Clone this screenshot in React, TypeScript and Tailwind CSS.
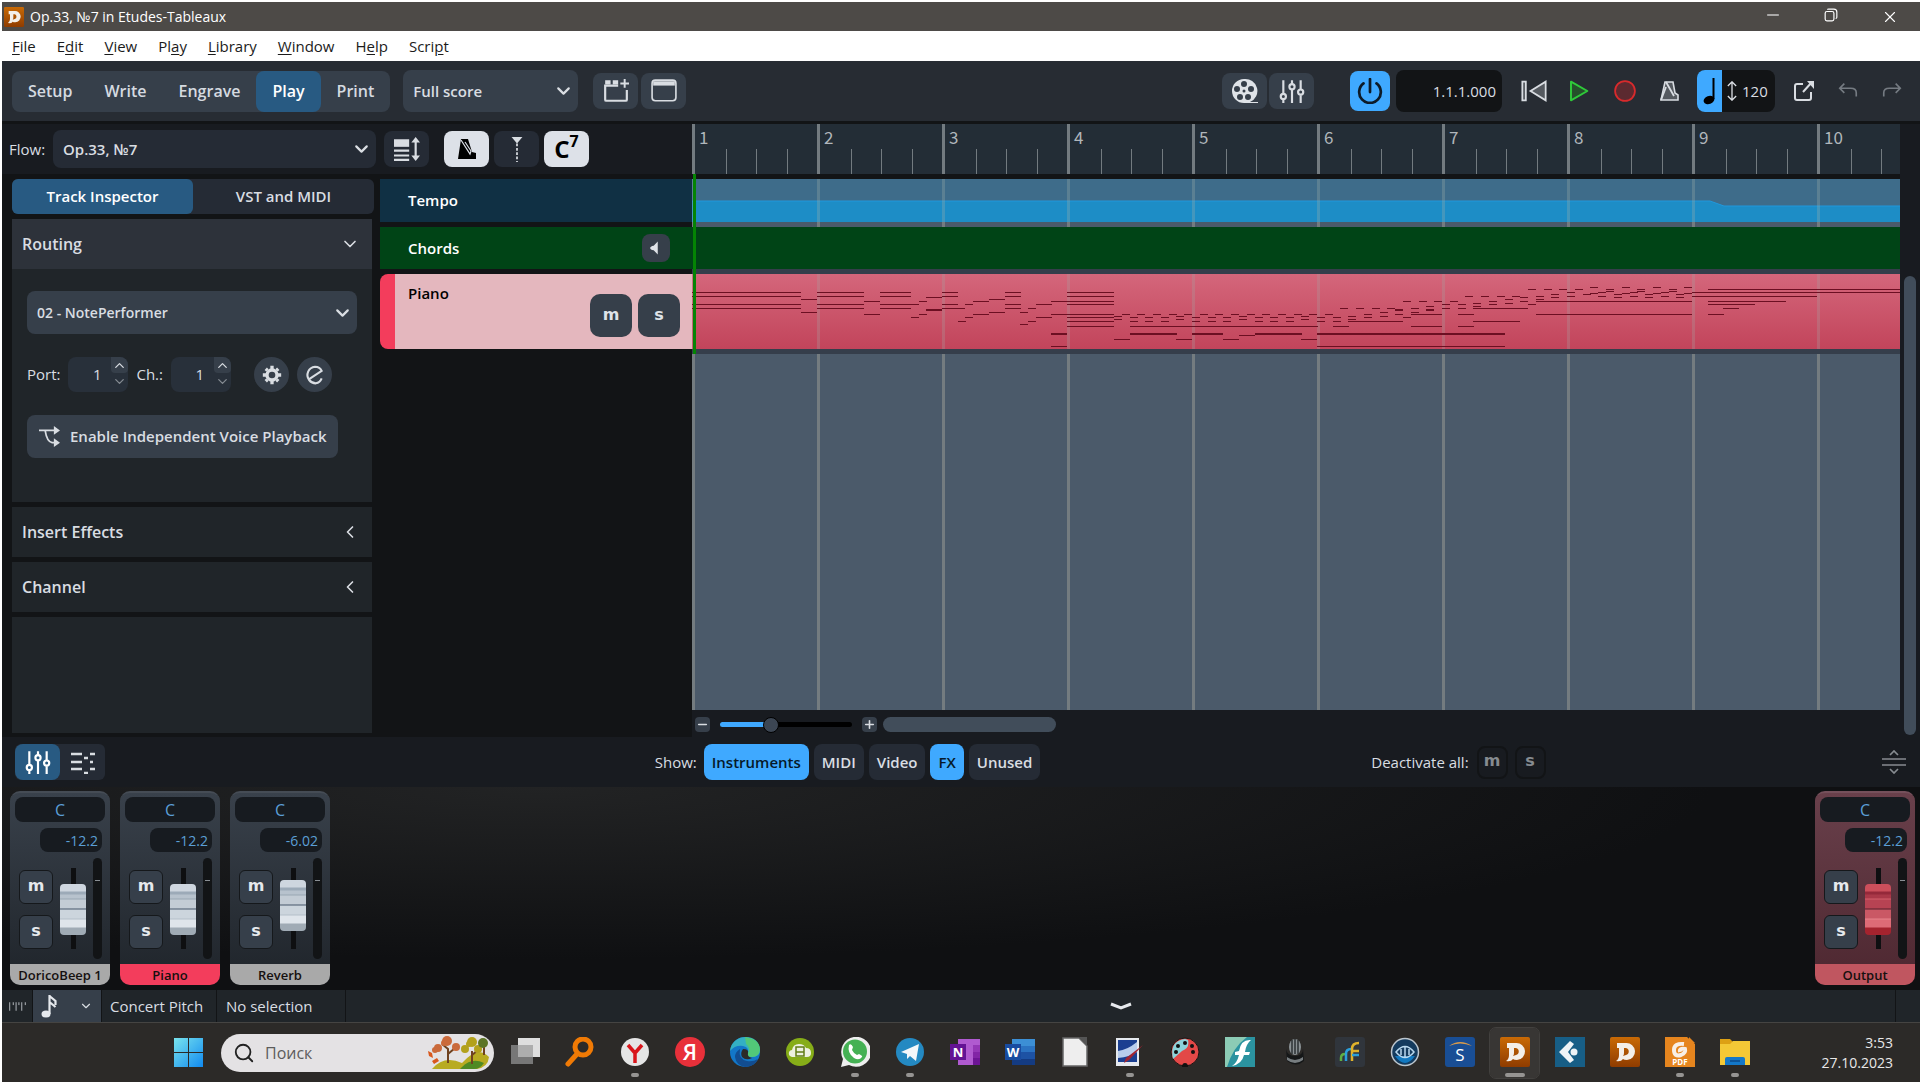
import { useState } from "react";
import type { ReactNode } from "react";
import clsx from "clsx";
import { ChevronDown, ChevronLeft, ChevronUp, Minus, Plus, Search, X } from "lucide-react";

const modes = ["Setup", "Write", "Engrave", "Play", "Print"];

const menus = [
  ["", "F", "ile"],
  ["E", "d", "it"],
  ["", "V", "iew"],
  ["Pl", "a", "y"],
  ["", "L", "ibrary"],
  ["", "W", "indow"],
  ["H", "e", "lp"],
  ["Scri", "p", "t"],
];

// [start, end, y] with start and end in sixteenths from bar 1
const notes: number[][] = [
  ...[18, 22, 30, 34].map((y) => [0, 14, y]),
  [14, 16, 25], [14, 16, 38],
  ...[18, 22, 30, 34].map((y) => [16, 22, y]),
  [22, 24, 27], [22, 24, 40],
  [24, 28, 18], [24, 28, 22], [24, 29, 30], [24, 28, 34],
  [28, 29, 43], [29, 30, 27], [29, 30, 40], [30, 32, 23],
  [32, 34, 18], [32, 34, 22], [32, 34, 30], [32, 35, 34],
  [34, 35, 47], [35, 36, 30], [35, 36, 43], [36, 38, 27], [36, 38, 40], [38, 40, 25], [38, 40, 38],
  ...[18, 22, 30, 34].map((y) => [40, 42, y]),
  [42, 43, 38], [42, 43, 50], [43, 44, 34], [43, 44, 47], [44, 46, 30], [44, 46, 43],
  [46, 54, 27], [46, 54, 40], [46, 48, 72],
  ...[18, 22, 30, 43, 47, 52].map((y) => [48, 54, y]),
  [54, 56, 65], [56, 80, 52], [62, 64, 65], [68, 70, 65], [70, 72, 61], [78, 80, 65],
  ...[54, 62, 70, 78, 84].flatMap((n) => [[n, n + 1, 42], [n, n + 1, 45]]),
  ...[56, 58, 60, 64, 66, 68, 72, 74, 76, 80, 82].flatMap((n) => [[n, n + 1, 43], [n, n + 1, 47]]),
  ...[55, 57, 59, 61, 63, 65, 67, 69, 71, 73, 75, 77, 79, 81].map((n) => [n, n + 1, 40]),
  ...[83, 85, 87, 89].map((n) => [n, n + 1, 34]),
  [82, 84, 52], [84, 91, 47], [86, 87, 40], [86, 87, 43], [88, 89, 38], [88, 89, 42], [90, 91, 40],
  [91, 92, 43], [92, 93, 34], [92, 93, 38], [94, 95, 32], [96, 97, 30], [96, 97, 34], [98, 99, 30], [98, 99, 34],
  ...[91, 93, 95, 97].map((n) => [n, n + 1, 27]),
  ...[99, 101, 103, 105].map((n) => [n, n + 1, 22]),
  ...[107, 109, 111, 113].map((n) => [n, n + 1, 15]),
  [92, 96, 40], [92, 96, 52], [98, 100, 40], [98, 100, 52], [100, 107, 34], [100, 106, 47], [80, 104, 72],
  [100, 101, 29], [100, 101, 32], [102, 103, 27], [102, 103, 30], [104, 105, 25], [104, 105, 29],
  [106, 107, 23], [106, 107, 27], [107, 108, 30], [108, 109, 22], [108, 109, 25], [110, 111, 20], [110, 111, 23],
  [112, 113, 18], [112, 113, 22], [114, 115, 20],
  ...[115, 119, 123, 127].flatMap((n) => [[n, n + 1, 13], [n, n + 1, 19]]),
  ...[116, 120, 124].flatMap((n) => [[n, n + 1, 18], [n, n + 1, 22], [n + 1, n + 2, 15], [n + 1, n + 2, 17], [n + 2, n + 3, 20], [n + 2, n + 3, 23]]),
  [108, 128, 27], [108, 128, 40], [128, 200, 18], [130, 200, 15], [128, 144, 22],
  [130, 140, 27], [130, 136, 30], [132, 134, 34], [130, 132, 40],
];

const thickNotes: number[][] = [
  [30, 32, 35], [46, 48, 59], [56, 62, 59], [64, 68, 59], [72, 78, 59], [80, 104, 59], [90, 91, 35], [94, 95, 35],
];

const SIXTEENTH = 7.8125;

function Svg({ size = 24, className, children }: { size?: number; className?: string; children: ReactNode }) {
  return (
    <svg
      width={size}
      height={size}
      viewBox="0 0 24 24"
      fill="none"
      stroke="currentColor"
      strokeWidth="2"
      className={clsx("shrink-0", className)}
      aria-hidden="true"
    >
      {children}
    </svg>
  );
}

function DoricoIcon({ size }: { size: number }) {
  return (
    <svg width={size} height={size} viewBox="0 0 30 30" aria-hidden="true">
      <defs>
        <linearGradient id="dorico" x1="0" y1="0" x2="0" y2="1">
          <stop offset="0" stopColor="#c96a05" />
          <stop offset="1" stopColor="#8f3c00" />
        </linearGradient>
      </defs>
      <rect width="30" height="30" rx="2" fill="url(#dorico)" />
      <path fillRule="evenodd" d="M7 6h9a8.500 8.500 0 0 1 1 17q-3 0-4-1-2 3-7 2 3-2 3-6v-7H7zM14 11v5q0 2-1 3l3-1a3.600 3.600 0 0 0 0-7z" fill="#f3efe9" />
    </svg>
  );
}

function MixerIcon() {
  return (
    <Svg size={26}>
      <path d="M4 2v13M4 20v3M12 2v4M12 11v12M20 2v9M20 16v7" />
      <circle cx="4" cy="17" r="2.4" />
      <circle cx="12" cy="8" r="2.4" />
      <circle cx="20" cy="13" r="2.4" />
    </Svg>
  );
}

function IconButton({ label, className, children }: { label: string; className?: string; children: ReactNode }) {
  return (
    <button aria-label={label} className={clsx("flex h-9 w-[45px] items-center justify-center rounded-lg", className)}>
      {children}
    </button>
  );
}

function Select({ label, value, className }: { label: string; value: string; className?: string }) {
  return (
    <div className={clsx("relative", className)}>
      <select aria-label={label} className="size-full appearance-none rounded-lg bg-transparent pr-8 pl-2.5">
        <option>{value}</option>
      </select>
      <ChevronDown size={21} strokeWidth={2.5} className="pointer-events-none absolute top-1/2 right-1 -translate-y-1/2" />
    </div>
  );
}

function TitleBar() {
  return (
    <header className="flex h-[29px] items-center gap-1.5 bg-[#4d4a47] pl-0.5 text-sm text-white">
      <DoricoIcon size={20} />
      <h1 className="grow">Op.33, №7 in Etudes-Tableaux</h1>
      <div className="flex">
        <button aria-label="Minimize" className="flex w-[58px] justify-center">
          <Svg size={14}><path d="M2 12h20" strokeWidth="1.800" /></Svg>
        </button>
        <button aria-label="Restore" className="flex w-[58px] justify-center">
          <Svg size={14}><rect x="2" y="6" width="15" height="16" rx="3" /><path d="M6 3q0-1 2-1h9q5 0 5 5v9q0 2-2 2" /></Svg>
        </button>
        <button aria-label="Close" className="flex w-[60px] justify-center">
          <X size={18} strokeWidth={1.5} />
        </button>
      </div>
    </header>
  );
}

function MenuBar() {
  return (
    <nav className="flex h-[30px] items-center gap-[21px] bg-white pl-2.5 text-[15px] text-[#1b1b1b]">
      {menus.map(([before, key, after]) => (
        <button key={before + key + after}>
          {before}
          <u className="underline-offset-2">{key}</u>
          {after}
        </button>
      ))}
    </nav>
  );
}

function Toolbar() {
  const [mode, setMode] = useState("Play");
  return (
    <div className="flex h-[60px] items-center bg-[#272c33] pl-2.5">
      <div className="flex h-[41px] rounded-lg bg-[#363f4a] text-base font-semibold">
        {modes.map((m) => (
          <button
            key={m}
            onClick={() => setMode(m)}
            className={clsx("rounded-lg px-4", mode === m ? "bg-[#285a82] text-white" : "text-[#d5dae0]")}
          >
            {m}
          </button>
        ))}
      </div>
      <Select label="Layout" value="Full score" className="ml-[13px] h-[42px] w-[175px] rounded-lg bg-[#363f4a] text-[15px] font-semibold" />
      <IconButton label="New tab" className="ml-[15px] bg-[#363f4a]">
        <Svg size={26}>
          <path d="M14 7H2v13q0 1 1 1h18q1 0 1-1v-9" />
          <path d="M20 1v8M16 5h8" strokeWidth="1.800" />
          <path d="M2 4h5M9 4h5" strokeWidth="4" />
        </Svg>
      </IconButton>
      <IconButton label="Window" className="ml-[3px] bg-[#363f4a]">
        <Svg size={26}><rect x="1" y="2" width="22" height="19" rx="3" strokeWidth="1.5" /><path d="M2 5h20" strokeWidth="4" /></Svg>
      </IconButton>

      <div className="ml-auto flex items-center pr-[13px]">
        <IconButton label="Video" className="bg-[#363f4a]">
          <svg width="28" height="26" viewBox="0 0 28 26" fill="#dfe3e8" aria-hidden="true">
            <path fillRule="evenodd" d="M13 1a12 12 0 1 0 0 24h14v-1h-8A12 12 0 0 0 13 1M13 3a3 3 0 1 1 0 6 3 3 0 0 1 0-6M6 8a3 3 0 1 1 0 6 3 3 0 0 1 0-6M20 8a3 3 0 1 1 0 6 3 3 0 0 1 0-6M9 16a3 3 0 1 1 0 6 3 3 0 0 1 0-6M17 16a3 3 0 1 1 0 6 3 3 0 0 1 0-6M13 11.500a1.500 1.500 0 1 0 0 3 1.500 1.500 0 0 0 0-3" />
          </svg>
        </IconButton>
        <IconButton label="Mixer" className="ml-0.5 bg-[#363f4a]"><MixerIcon /></IconButton>
        <button aria-label="Activate project" className="ml-9 flex h-10 w-10 items-center justify-center rounded-lg bg-[#3fa9ff] text-[#0d1b28]">
          <Svg size={26}><path d="M12 1v12M6 5a10 10 0 1 0 12 0" strokeWidth="2.5" strokeLinecap="round" /></Svg>
        </button>
        <output className="ml-1.5 h-[42px] w-[106px] rounded-lg bg-[#121416] pr-1.5 text-right text-[15px] leading-[42px]">1.1.1.000</output>
        <button aria-label="Rewind" className="ml-[18px] w-8">
          <Svg size={28}><path d="M2 4h3v16H2zM22 4v16L9 12z" fill="#555a60" strokeWidth="1.5" /></Svg>
        </button>
        <button aria-label="Start playback" className="ml-3 w-8 text-[#2fc93a]">
          <Svg size={28}><path d="M6 4v16L20 12z" fill="#25502b" strokeWidth="1.700" strokeLinejoin="round" /></Svg>
        </button>
        <button aria-label="Record" className="ml-[15px] w-8 text-[#d82a2c]">
          <Svg size={28}><circle cx="12" cy="12" r="8.500" fill="#5c2a30" strokeWidth="1.500" /></Svg>
        </button>
        <button aria-label="Metronome click" className="ml-[15px] w-8">
          <Svg size={24}><path d="M7 3h8l2 11 3 2v5H3z" fill="#555a60" strokeWidth="1.600" /><path d="m8 3 8 14M3 21l5-13" strokeWidth="1.800" /></Svg>
        </button>
        <div className="ml-[7px] flex h-[42px] w-[78px] items-center overflow-hidden rounded-lg bg-[#121416]">
          <button aria-label="Fixed tempo mode" className="flex h-full w-[25px] items-center justify-center bg-[#3fa9ff] text-black">
            <svg width="14" height="28" viewBox="0 0 14 28" aria-hidden="true">
              <ellipse cx="6" cy="23" rx="5.500" ry="4" fill="currentColor" transform="rotate(-20 6 23)" />
              <path d="M10.500 1v21" stroke="currentColor" strokeWidth="2" />
            </svg>
          </button>
          <Svg size={20}><path d="M12 1v22M7 6l5-5 5 5M7 18l5 5 5-5" strokeWidth="1.600" /></Svg>
          <span className="text-[15px]">120</span>
        </div>
        <button aria-label="Open in new window" className="ml-[17px] w-[45px]">
          <Svg size={24}><path d="M11 5H5q-2 0-2 2v12q0 2 2 2h12q2 0 2-2v-6M11 13l9-10" /><path d="M15 2h7v8z" fill="currentColor" stroke="none" /></Svg>
        </button>
        <button aria-label="Undo" className="w-11 text-[#757b82]">
          <Svg size={22}><path d="M8 4 3 9l5 5M3 9h12q6 0 6 5v4" strokeWidth="1.800" /></Svg>
        </button>
        <button aria-label="Redo" className="w-[26px] text-[#757b82]">
          <Svg size={22}><path d="m16 4 5 5-5 5M21 9H9q-6 0-6 5v4" strokeWidth="1.800" /></Svg>
        </button>
      </div>
    </div>
  );
}

function FlowBar() {
  return (
    <div className="flex h-[50px] items-center bg-[#181b20] pl-[7px] text-[15px]">
      <span className="w-11">Flow:</span>
      <Select label="Flow" value="Op.33, №7" className="h-[38px] w-[323px] rounded-lg bg-[#252b35] font-semibold" />
      <IconButton label="Track heights" className="ml-2 bg-[#252b35]">
        <Svg size={26}>
          <path d="M0 3h14v7H0z" fill="currentColor" stroke="none" />
          <path d="M0 13.500h14M0 18h14M0 22h14M20 4v16" />
          <path d="m20 1 4 5h-8zM20 23l4-5h-8z" fill="currentColor" stroke="none" />
        </Svg>
      </IconButton>
      <IconButton label="Click" className="ml-[15px] bg-[#dde1e8] text-black">
        <Svg size={24}><path d="M6 2h7l4 13 4 1v6H3z" fill="currentColor" stroke="none" /><path d="m6 3 9 14 1-3-6-9" stroke="#dde1e8" strokeWidth="1.200" /></Svg>
      </IconButton>
      <IconButton label="Markers" className="ml-[5px] bg-[#252b35]">
        <Svg size={26}><path d="M7 1h10l-5 6z" fill="currentColor" stroke="none" /><path d="M12 7v17" strokeWidth="1.600" strokeDasharray="2.500 1.500" /></Svg>
      </IconButton>
      <IconButton label="Chords" className="ml-[5px] bg-[#dde1e8] text-2xl font-bold text-black">
        C<sup className="text-base">7</sup>
      </IconButton>
    </div>
  );
}

function NumberField({ id, label }: { id: string; label: string }) {
  return (
    <div className="flex items-center gap-2">
      <label htmlFor={id}>{label}</label>
      <div className="flex h-[35px] w-[60px] overflow-hidden rounded-lg bg-[#28303a]">
        <input
          id={id}
          type="number"
          defaultValue={1}
          className="w-[43px] appearance-none pr-2.5 text-right [&::-webkit-inner-spin-button]:appearance-none"
        />
        <div className="flex w-[17px] flex-col">
          <button aria-label={`${label} up`} className="flex h-4 items-center justify-center rounded-b bg-[#363f4a]"><ChevronUp size={15} /></button>
          <button aria-label={`${label} down`} className="flex h-4 items-center justify-center text-[#858b92]"><ChevronDown size={15} /></button>
        </div>
      </div>
    </div>
  );
}

function Inspector() {
  return (
    <aside className="flex w-[362px] shrink-0 flex-col gap-[5px]">
      <div className="flex h-[35px] rounded-md bg-[#252b35] text-[15px] font-semibold">
        <button className="w-[181px] rounded-md bg-[#285a82] text-white">Track Inspector</button>
        <button className="grow">VST and MIDI</button>
      </div>
      <section className="mr-0.5 bg-[#202529] pb-11">
        <button className="flex h-[50px] w-full items-center justify-between bg-[#2d323a] pr-3 pl-2.5 text-base font-semibold">
          Routing
          <ChevronDown size={20} />
        </button>
        <div className="flex flex-col items-start gap-[23px] px-[15px] pt-[22px] text-[15px]">
          <Select label="Instrument" value="02 - NotePerformer" className="h-[43px] w-full rounded-lg bg-[#363f4a] text-sm font-semibold" />
          <div className="flex items-center gap-2">
            <NumberField id="port" label="Port:" />
            <NumberField id="channel" label="Ch.:" />
            <button aria-label="Edit instrument" className="ml-[15px] flex size-[35px] items-center justify-center rounded-full bg-[#363f4a]">
              <Svg size={20}><circle cx="12" cy="12" r="6" strokeWidth="4" /><path d="M12 1v4M12 19v4M1 12h4M19 12h4M4.500 4.500l2 2M17.500 17.500l2 2M4.500 19.500l2-2M17.500 6.500l2-2" strokeWidth="4" /></Svg>
            </button>
            <button aria-label="Endpoint setup" className="flex size-[35px] items-center justify-center rounded-full bg-[#363f4a]">
              <Svg size={20}><path d="M5 17 20 7Q18 2 12 2a10 10 0 0 0-7 16q3 4 8 4 5-1 7-6" strokeWidth="2.500" /></Svg>
            </button>
          </div>
          <button className="flex h-[43px] items-center gap-2.5 rounded-lg bg-[#363f4a] pr-3 pl-3 font-semibold">
            <Svg size={21}><path d="M0 5h19M7 5q2 13 8 14h4" /><path d="m17 0 7 5-7 5zM17 14l7 5-7 5z" fill="currentColor" stroke="none" /></Svg>
            Enable Independent Voice Playback
          </button>
        </div>
      </section>
      {["Insert Effects", "Channel"].map((name) => (
        <button key={name} className="mr-0.5 flex h-[50px] items-center justify-between bg-[#202529] pr-3 pl-2.5 text-base font-semibold">
          {name}
          <ChevronLeft size={20} />
        </button>
      ))}
      <div className="mr-0.5 mb-1 grow bg-[#202529]" />
    </aside>
  );
}

function TrackHeaders() {
  return (
    <div className="ml-1.5 flex grow flex-col gap-[5px] text-[15px] font-semibold text-white">
      <div className="flex h-[43px] items-center bg-[#103044] pl-7">Tempo</div>
      <div className="flex h-[42px] items-center justify-between bg-[#004416] pr-[22px] pl-7">
        Chords
        <button aria-label="Hear chords" className="flex size-7 items-center justify-center rounded-lg bg-[#363f4a] text-[#dfe3e8]">
          <Svg size={14}><path d="M15 1v22L8 16q-6-1-6-4t6-4z" fill="currentColor" stroke="none" /></Svg>
        </button>
      </div>
      <div className="flex h-[75px] justify-between rounded-l-lg border-l-[15px] border-[#f33d5c] bg-[#e4b7be] pr-3 pl-[13px] text-black">
        <span className="pt-2">Piano</span>
        <div className="mt-5 flex gap-1.5">
          <MuteSolo className="h-[43px] w-[42px] rounded-[10px] bg-[#363f4a] text-[#dfe3e8]">m</MuteSolo>
          <MuteSolo className="h-[43px] w-[42px] rounded-[10px] bg-[#363f4a] text-[#dfe3e8]">s</MuteSolo>
        </div>
      </div>
    </div>
  );
}

function MuteSolo({ className, children }: { className: string; children: string }) {
  return (
    <button
      aria-label={children === "m" ? "Mute" : "Solo"}
      className={clsx("flex items-center justify-center pb-0.5 font-['DejaVu_Sans',sans-serif] text-base font-bold", className)}
    >
      {children}
    </button>
  );
}

function BarLines({ className }: { className: string }) {
  return (
    <div className="pointer-events-none absolute inset-0 flex overflow-hidden">
      {Array.from({ length: 10 }, (_, i) => (
        <div key={i} className={clsx("w-[125px] shrink-0 border-l-[3px]", className)} />
      ))}
    </div>
  );
}

function Ruler() {
  return (
    <div className="flex h-[50px] overflow-hidden bg-[#232d36] font-['Noto_Sans_CJK_JP',sans-serif] text-[17px] text-[#b0b6bb]">
      {Array.from({ length: 10 }, (_, i) => (
        <div key={i} className="flex w-[125px] shrink-0 flex-col justify-between border-l-[3px] border-[#737b80]">
          <span className="h-[25px] pl-1 leading-[25px]">{i + 1}</span>
          <div className="grid h-[25px] grid-cols-4">
            {[0, 1, 2, 3].map((beat) => (
              <div key={beat} className={clsx(beat > 0 && "border-l border-[#737b80]")} />
            ))}
          </div>
        </div>
      ))}
    </div>
  );
}

function Timeline() {
  return (
    <div className="flex min-w-0 grow flex-col">
      <Ruler />
      <div className="h-[5px] bg-[#121416]" />
      <div className="relative flex grow flex-col gap-[5px] bg-[#4b5a6a]">
        <BarLines className="border-[#747c80]" />
        <div className="relative h-[43px] overflow-hidden bg-[#3e6c8a]">
          <svg width="100%" height="43" aria-hidden="true">
            <path d="M0 22h1018l14 5h2000v20H0z" fill="#1d8dc6" />
            <path d="M0 22h1018l14 5h2000" fill="none" stroke="#2098dc" />
          </svg>
          <BarLines className="border-[#a0b0a8]/30" />
        </div>
        <div className="relative h-[42px] bg-[#004416]" />
        <div className="relative h-[75px] bg-linear-to-b from-[#d4667b] to-[#c2445b] shadow-[0_5px_#353e4b,0_-5px_#353e4b]">
          <BarLines className="border-[#a8a0a0]/30" />
          <svg width="100%" height="75" fill="#6c0f22" className="relative" aria-hidden="true">
            {notes.map(([start, end, y], i) => (
              <rect key={i} x={Math.round(start * SIXTEENTH)} y={y} width={Math.round((end - start) * SIXTEENTH)} height="1" />
            ))}
            {thickNotes.map(([start, end, y], i) => (
              <rect key={i} x={Math.round(start * SIXTEENTH)} y={y} width={Math.round((end - start) * SIXTEENTH)} height="2" />
            ))}
          </svg>
        </div>
        {/* playhead */}
        <div className="absolute -top-[5px] left-px h-[180px] w-[3px] bg-[#048404]" />
      </div>
      <div className="flex h-[27px] shrink-0 items-center bg-[#181b20] pt-0.5 pl-[3px]">
        <button aria-label="Zoom out" className="flex size-[15px] items-center justify-center rounded-sm bg-[#363f4a]"><Minus size={13} strokeWidth={3} /></button>
        <input
          type="range"
          aria-label="Zoom"
          defaultValue={37}
          className="mx-2.5 h-[5px] w-[132px] appearance-none rounded-full bg-[linear-gradient(to_right,#3fa9ff_38%,#000_38%)] [&::-webkit-slider-thumb]:size-4 [&::-webkit-slider-thumb]:appearance-none [&::-webkit-slider-thumb]:rounded-full [&::-webkit-slider-thumb]:border [&::-webkit-slider-thumb]:border-black [&::-webkit-slider-thumb]:bg-[#3c4653]"
        />
        <button aria-label="Zoom in" className="flex size-[15px] items-center justify-center rounded-sm bg-[#363f4a]"><Plus size={13} strokeWidth={3} /></button>
        <div className="ml-1.5 h-[15px] w-[173px] rounded-full bg-[#414d5a]" />
      </div>
    </div>
  );
}

function MixerBar() {
  const filters = [
    { name: "Instruments", on: true },
    { name: "MIDI", on: false },
    { name: "Video", on: false },
    { name: "FX", on: true },
    { name: "Unused", on: false },
  ];
  return (
    <div className="grid h-[50px] grid-cols-[1fr_auto_1fr] items-center bg-[#181b20] pr-3.5 pl-[13px] text-[15px]">
      <div className="flex">
        <div className="flex rounded-md bg-[#252b35]">
          <IconButton label="Mixer" className="bg-[#285a82] text-white"><MixerIcon /></IconButton>
          <IconButton label="Key editor">
            <Svg size={24}><path d="M0 4h11M0 12h11M0 19h11M19 4h5M13 8h4M19 12h3M19 19h5M13 23h4" strokeWidth="2.600" /></Svg>
          </IconButton>
        </div>
      </div>
      <div className="flex items-center gap-[5px] pr-[226px]">
        <span className="pr-0.5">Show:</span>
        {filters.map(({ name, on }) => (
          <button
            key={name}
            className={clsx("h-9 rounded-lg px-2 font-semibold", on ? "bg-[#3fa9ff] text-[#06192a]" : "bg-[#252b35]")}
          >
            {name}
          </button>
        ))}
      </div>
      <div className="flex items-center gap-[7px] pl-[105px]">
        <span className="pr-px">Deactivate all:</span>
        <MuteSolo className="h-[33px] w-[31px] rounded-lg border-2 border-[#121416] text-[#868b90]">m</MuteSolo>
        <MuteSolo className="h-[33px] w-[31px] rounded-lg border-2 border-[#121416] text-[#868b90]">s</MuteSolo>
        <button aria-label="Resize panel" className="ml-auto text-[#868b90]">
          <Svg size={24}><path d="M0 9h24M0 15h24M8 5l4-4 4 4M8 19l4 4 4-4" strokeWidth="1.700" /></Svg>
        </button>
      </div>
    </div>
  );
}

const fader =
  "h-[101px] w-[26px] appearance-none bg-[linear-gradient(#0e0f11,#0e0f11)] bg-[length:5px_81px] bg-center bg-no-repeat [direction:rtl] [writing-mode:vertical-lr] [&::-webkit-slider-thumb]:h-[51px] [&::-webkit-slider-thumb]:w-[26px] [&::-webkit-slider-thumb]:appearance-none [&::-webkit-slider-thumb]:rounded-sm";

const greyThumb =
  "[&::-webkit-slider-thumb]:bg-[linear-gradient(#ced6df_0_7px,#9caab8_8px_10px,#b7c2cd_11px_14px,#99a7b3_15px,#c3ccd5_16px_24px,#46566a_25px,#ccd5dd_26px_34px,#b4bfc9_35px,#dfe5eb_36px_43px,#a0abb5_44px_100%)]";

const redThumb =
  "[&::-webkit-slider-thumb]:bg-[linear-gradient(#cc4f5b_0_7px,#95293a_8px_10px,#aa3848_11px_14px,#d3606b_15px,#b74353_16px_24px,#541f2b_25px,#ca5865_26px_34px,#e6848c_35px,#de6b76_36px_43px,#a5232e_44px_100%)]";

type Strip = { name: string; gain: string; level: number; color: string; output?: boolean };

const strips: Strip[] = [
  { name: "DoricoBeep 1", gain: "-12.2", level: 48, color: "bg-[#a9a9a9]" },
  { name: "Piano", gain: "-12.2", level: 48, color: "bg-[#f33d5c]" },
  { name: "Reverb", gain: "-6.02", level: 57, color: "bg-[#a9a9a9]" },
];

const output: Strip = { name: "Output", gain: "-12.2", level: 48, color: "bg-[#c05660]", output: true };

function ChannelStrip({ name, gain, level, color, output }: Strip) {
  return (
    <section
      className={clsx(
        "flex w-[100px] flex-col overflow-hidden rounded-[10px] border-t-2",
        output ? "border-[#75505b] bg-linear-to-b from-[#69404b] to-[#4d2730]" : "border-[#454c55] bg-linear-to-b from-[#39414b] to-[#1f242a]",
      )}
    >
      <div className="mx-[5px] mt-1 h-[25px] rounded-lg bg-[#171b20] text-center text-base leading-[26px] text-[#5b9fd6]">C</div>
      <div className="mt-1.5 mr-2 ml-[30px] h-6 rounded-lg bg-[#171b20] pr-1 text-right text-sm leading-[26px] text-[#5b9fd6]">{gain}</div>
      <div className="mt-1.5 flex px-2">
        <div className="mt-3 ml-px flex flex-col gap-[11px]">
          <MuteSolo className="size-[34px] rounded-md border border-[#15181b] bg-[#363f4a] text-[#e6e9ed]">m</MuteSolo>
          <MuteSolo className="size-[34px] rounded-md border border-[#15181b] bg-[#363f4a] text-[#e6e9ed]">s</MuteSolo>
        </div>
        <input type="range" aria-label={`${name} volume`} defaultValue={level} className={clsx("ml-[7px]", fader, output ? redThumb : greyThumb)} />
        <div className="ml-auto h-[101px] w-[9px] rounded-full bg-[#121416] px-0.5 pt-[22px]">
          <div className="h-px bg-[#8a8f94]" />
        </div>
      </div>
      <h2 className={clsx("mt-[5px] h-[21px] text-center text-[13px] leading-[22px] font-semibold whitespace-nowrap text-[#15100f]", color)}>{name}</h2>
    </section>
  );
}

function Mixer() {
  return (
    <div className="flex h-[203px] items-start gap-2.5 bg-[radial-gradient(ellipse_at_28%_0%,#222324,#0f1012_60%)] pt-1 pr-[5px] pl-2">
      {strips.map((s) => (
        <ChannelStrip key={s.name} {...s} />
      ))}
      <div className="ml-auto">
        <ChannelStrip {...output} />
      </div>
    </div>
  );
}

function StatusBar() {
  return (
    <div className="flex h-8 items-stretch gap-px bg-[#121416] text-[15px]">
      <div className="flex w-[30px] items-center justify-center bg-[#202529]">
        <Svg size={17} className="text-[#b3b8bd]"><path d="M1 6v12M6 6v4M10 6v12M14 6v4M18 6v12M23 6v4" strokeWidth="1.400" /></Svg>
      </div>
      <button aria-label="Rhythmic grid" className="flex w-[68px] items-center justify-between bg-[#363f4a] px-2">
        <svg width="16" height="24" viewBox="0 0 16 24" aria-hidden="true">
          <ellipse cx="5" cy="20" rx="4.500" ry="3.500" fill="#e6e9ed" />
          <path d="M8.500 20V1M8.500 2l6 5v4M8.500 8l6 5" stroke="#e6e9ed" strokeWidth="2.200" fill="none" />
        </svg>
        <ChevronDown size={14} />
      </button>
      <div className="flex w-[114px] items-center bg-[#202529] pl-2">Concert Pitch</div>
      <div className="flex w-[128px] items-center bg-[#202529] pl-[9px]">No selection</div>
      <div className="flex grow items-center justify-center bg-[#202529]">
        <svg width="22" height="8" viewBox="0 0 22 8" fill="none" stroke="#e6e9ed" strokeWidth="3" aria-hidden="true"><path d="m1 2 10 4 10-4" /></svg>
      </div>
      <div className="w-6 bg-[#202529]" />
    </div>
  );
}

const apps: { name: string; state?: "open" | "active"; icon: ReactNode }[] = [
  { name: "Task view", icon: <><rect x="1" y="8" width="22" height="19" fill="#777" /><rect x="8" y="1" width="22" height="19" fill="#dedede" /><path d="M8 8h15v12H8z" fill="#adadad" /></> },
  { name: "Everything", icon: <><circle cx="18" cy="10" r="8" fill="none" stroke="#f07a05" strokeWidth="5" /><path d="m12 17-9 10" stroke="#f07a05" strokeWidth="5" strokeLinecap="round" /></> },
  { name: "Yandex Browser", state: "open", icon: <><circle cx="15" cy="15" r="14" fill="#e5e5e5" /><path d="m8 8 7 8v10M22 8l-7 8" stroke="#d9151b" strokeWidth="3.500" fill="none" /></> },
  { name: "Yandex", icon: <><circle cx="15" cy="15" r="15" fill="#e8303a" /><text x="15" y="23" fontSize="22" fontWeight="600" fill="#fff" textAnchor="middle">Я</text></> },
  { name: "Edge", icon: <><circle cx="15" cy="15" r="15" fill="#1377c8" /><path d="M0 14C2-5 30-4 30 13q0 7-8 7-6 0-4-4 1-6-5-7-8-1-13 5z" fill="#34b0c4" /><path d="M15 0q15 2 15 13-1 7-8 7-6 0-4-4 3-5-2-9z" fill="#52c878" /><path d="M10 12q-2 10 7 12 6 1 11-2-4 8-13 8-9-2-10-10 0-5 5-8z" fill="#124d91" /><path d="M13 12q6 0 5 4-1 4 4 5-6 3-10-1-2-4 1-8z" fill="#2c2a28" /></> },
  { name: "Camo", icon: <><circle cx="15" cy="15" r="14" fill="#86ad18" /><path d="M7 20q-4-1-3-5 1-2 3-2 1-6 7-6 5 0 7 4 5 0 5 5 0 4-4 4z" fill="#edf1e0" /><path d="M11 10h8v9h-8zM11 15h8" fill="none" stroke="#617d16" strokeWidth="1.500" /></> },
  { name: "WhatsApp", state: "open", icon: <><path d="M1 30 3 22A15 15 0 1 1 9 28z" fill="#eee" /><circle cx="15" cy="14.500" r="12" fill="#45b154" /><path d="M9 8q2-2 4 2l-1 3q2 4 5 5l2-1q4 2 3 3-3 4-8 1Q7 16 9 8z" fill="#fff" /></> },
  { name: "Telegram", state: "open", icon: <><circle cx="15" cy="15" r="14" fill="#2489c2" /><path d="m6 15 18-8-3 17-6-5-3 3v-5z" fill="#f3f7fa" /></> },
  { name: "OneNote", icon: <><path d="M8 2h22v26H8z" fill="#b05ad0" /><path d="M23 8h7v7h-7z" fill="#9437b6" /><path d="M23 15h7v6h-7z" fill="#8225a6" /><path d="M23 21h7v7h-7z" fill="#6d1595" /><path d="M0 7h16v16H0z" fill="#641394" /><text x="8" y="20" fontSize="13" fontWeight="700" fill="#fff" textAnchor="middle">N</text></> },
  { name: "Word", icon: <><path d="M7 2h23v7H7z" fill="#3c8fd5" /><path d="M7 9h23v6H7z" fill="#2b73c2" /><path d="M7 15h23v7H7z" fill="#1d52a4" /><path d="M7 22h23v6H7z" fill="#143b82" /><path d="M0 7h16v16H0z" fill="#184ba0" /><text x="8" y="20" fontSize="13" fontWeight="700" fill="#fff" textAnchor="middle">W</text></> },
  { name: "LibreOffice", icon: <><path d="M3 1h16l8 8v20H3z" fill="#eee" stroke="#666" strokeWidth="1.500" /><path d="M19 0h8v9z" fill="#555" /></> },
  { name: "Paint", state: "open", icon: <><path d="M1 1h23v28H1z" fill="#e6e9ee" /><path d="M3 3h19v22H3z" fill="#1b3f91" /><path d="M3 14q9-1 19-9v10q-7 5-19 6z" fill="#b9cdec" /><path d="M28 8 14 23l-5 3 2-5z" fill="#a22431" /></> },
  { name: "Palette", icon: <><circle cx="15" cy="15" r="14" fill="#e34847" stroke="#151515" /><path d="M3 22Q-1 4 15 2l3 1q2 8-6 11z" fill="#8cd3da" /><g fill="#111"><circle cx="15" cy="6" r="2" /><circle cx="8" cy="9" r="2" /><circle cx="22" cy="9" r="2" /><circle cx="6" cy="15" r="2" /><circle cx="23" cy="15" r="2" /><path d="M12 30q0-4 3-4t3 4z" /></g></> },
  { name: "Finale", icon: <><path d="M0 0h30v30H0z" fill="#2b93a0" /><path d="M0 0h22Q8 10 2 30H0z" fill="#8ccbb5" /><path d="M26 3q-10-1-12 11l-4 1v3h4q-2 8-7 11 10-2 12-11h5l1-3h-5q1-8 6-12z" fill="#fff" /></> },
  { name: "Voice recorder", icon: <><ellipse cx="15" cy="10" rx="6" ry="8" fill="#8a9194" /><path d="M12 3v14M15 2v15M18 3v14" stroke="#2d3234" strokeWidth="1.500" /><path d="M6 12q1 7 9 7t8-7l1 12q-8 7-17 0z" fill="#151718" /><path d="M7 20q8 6 16 0v3q-8 6-16 0z" fill="#777d80" /></> },
  { name: "rf", icon: <><rect width="30" height="30" rx="3" fill="#30353c" /><g fill="none" strokeWidth="2.500"><path d="M6 24v-3q0-4 4-4" stroke="#5faf42" /><path d="M11 24v-7q0-5 5-5" stroke="#2a9fdb" /><path d="M17 24V12q0-6 7-6M17 14h7" stroke="#e0b22b" /><path d="M17 18h7" stroke="#2a9fdb" /></g></> },
  { name: "Viewer", icon: <><circle cx="15" cy="15" r="13.500" fill="#143b5e" stroke="#bbc5cd" strokeWidth="1.500" /><path d="M5 19q10 14 20 0z" fill="#1279c1" /><path d="M6 15q9-11 18 0-9 11-18 0zM15 10v10M11 12v6M19 12v6" fill="none" stroke="#b9d9ef" strokeWidth="1.500" /></> },
  { name: "Sibelius", icon: <><rect width="30" height="30" rx="3" fill="#194e95" /><path d="M4 9q11-8 23 0-12-5-23 0z" fill="#d79a4b" /><text x="15" y="24" fontSize="17" fill="#fff" textAnchor="middle">S</text></> },
  { name: "Dorico", state: "active", icon: <DoricoIcon size={30} /> },
  { name: "Cubase", icon: <><path d="M0 0h30v30H0z" fill="#175e86" /><path d="m15 4 4 3-6 8 6 8-4 3L4 15z" fill="#eef3f6" /><circle cx="19" cy="15" r="3.500" fill="#eef3f6" /></> },
  { name: "Dorico 5", icon: <DoricoIcon size={30} /> },
  { name: "PDF editor", state: "open", icon: <><path d="M0 0h22l8 7v23H0z" fill="#e6851e" /><path d="m24 0 6 6h-6z" fill="#e6851e" /><path d="M19 7q-10-1-10 6 0 7 7 5 5-2 4-6-6-1-5 3" fill="none" stroke="#f8efe6" strokeWidth="4" /><text x="15" y="28" fontSize="8" fontWeight="700" fill="#fff" textAnchor="middle">PDF</text></> },
  { name: "File Explorer", state: "open", icon: <><path d="M0 2h10l3 3v6H0z" fill="#dda014" /><path d="M0 7h10l3-3h17v24H0z" fill="#f4c836" /><path d="M5 28v-6q0-2 2-2h16q2 0 2 2v6z" fill="#1478c8" /><path d="M10 24h10" stroke="#0b4a8b" strokeWidth="1.500" /></> },
];

function TreesArt() {
  return (
    <svg width="64" height="36" viewBox="0 0 64 36" aria-hidden="true">
      <path d="M4 34q12-14 30-6Q50 10 61 22q-1 10-12 12z" fill="#b8ab21" />
      <path d="M34 32q10-10 22-4-4 6-10 6H32z" fill="#4f8a23" />
      <path d="M20 28V14l-6-5M20 19l7-6M44 29V16M44 20l6-5M56 20v-8" stroke="#70421f" strokeWidth="2" fill="none" />
      <g fill="#ca6a3b"><circle cx="19" cy="6" r="5" /><circle cx="16" cy="8" r="3" /><circle cx="10" cy="13" r="4" /><circle cx="7" cy="15" r="3" /><circle cx="28" cy="12" r="4" /></g>
      <g fill="#b3a11c"><circle cx="44" cy="7" r="5" /><circle cx="41" cy="9" r="3" /><circle cx="37" cy="14" r="4" /><circle cx="50" cy="14" r="4" /></g>
      <circle cx="55" cy="8" r="5" fill="#5d7526" />
      <path d="m0 16 4 2 1 5-4-2zM4 26l5-3 2 3-5 3z" fill="#d9581d" />
    </svg>
  );
}

function Taskbar() {
  return (
    <footer className="flex h-[60px] items-center border-t border-[#454442] bg-[#2c2a28]">
      <button aria-label="Start" className="ml-[172px]">
        <svg width="29" height="29" viewBox="0 0 29 29" aria-hidden="true">
          <defs>
            <linearGradient id="start" x1="0" y1="0" x2="1" y2="1">
              <stop offset="0" stopColor="#79e4ee" />
              <stop offset="1" stopColor="#118af0" />
            </linearGradient>
          </defs>
          <path d="M0 0h14v14H0zM15 0h14v14H15zM0 15h14v14H0zM15 15h14v14H15z" fill="url(#start)" />
        </svg>
      </button>
      <label className="ml-[18px] flex h-[38px] w-[273px] items-center rounded-full bg-[#e4e2e4] pr-0.5 pl-3 text-[#222]">
        <Search size={22} />
        <input placeholder="Поиск" aria-label="Поиск" className="ml-2.5 w-0 grow text-base placeholder:text-[#5c5c5c]" />
        <TreesArt />
      </label>
      <div className="ml-[3px] flex">
        {apps.map(({ name, state, icon }) => (
          <button key={name} aria-label={name} className="flex w-[55px] justify-center">
            <span
              className={clsx(
                "flex h-[50px] w-[49px] flex-col items-center rounded-md pt-[9px]",
                state === "active" && "bg-[#383634] outline outline-[#42403e]",
              )}
            >
              <svg width="30" height="30" viewBox="0 0 30 30" aria-hidden="true">{icon}</svg>
              {state && <span className={clsx("mt-1.5 h-1 rounded-full bg-[#969492]", state === "active" ? "w-5" : "w-2")} />}
            </span>
          </button>
        ))}
      </div>
      <div className="ml-auto pr-[27px] text-right text-sm leading-5 text-[#e8e8e8]">
        <p>3:53</p>
        <p>27.10.2023</p>
      </div>
    </footer>
  );
}

export default function App() {
  return (
    <div className="flex min-h-screen flex-col bg-white pt-0.5 pr-0.5 pb-[3px] pl-0.5 font-['Open_Sans',sans-serif] text-[#d9dde2]">
      <TitleBar />
      <MenuBar />
      <Toolbar />
      <main className="flex grow border-t-[3px] border-[#121416] bg-[#121416]">
        <div className="flex w-[690px] shrink-0 flex-col">
          <FlowBar />
          <div className="flex grow pt-[5px] pl-2.5">
            <Inspector />
            <TrackHeaders />
          </div>
        </div>
        <Timeline />
        <div className="flex w-5 shrink-0 flex-col bg-[#181b20] px-1 pt-[152px] pb-0.5">
          <div className="grow rounded-full bg-[#414d5a]" />
        </div>
      </main>
      <MixerBar />
      <Mixer />
      <StatusBar />
      <Taskbar />
    </div>
  );
}
